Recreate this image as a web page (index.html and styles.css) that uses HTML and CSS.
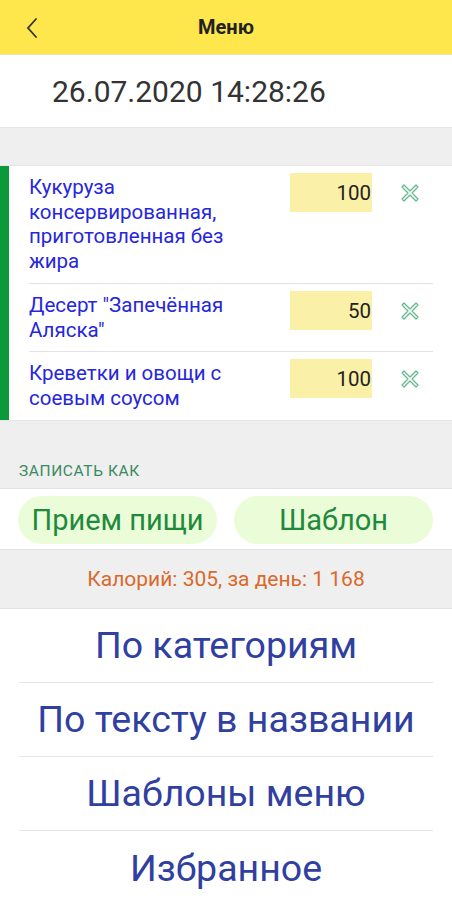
FILE: index.html
```html
<!DOCTYPE html>
<html lang="ru">
<head>
  <meta charset="UTF-8">
  <meta name="viewport" content="width=device-width, initial-scale=1.0">
  <title>Меню</title>
  <link rel="stylesheet" href="styles.css">
</head>
<body>

  <!-- Шапка -->
  <div class="header">
    <span class="back">
      <svg width="14" height="22" viewBox="0 0 14 22"><path d="M11 2 L3 11 L11 20" fill="none" stroke="#333" stroke-width="1.8" stroke-linecap="round"/></svg>
    </span>
    <h1>Меню</h1>
  </div>

  <div class="date-block">26.07.2020 14:28:26</div>

  <div class="spacer"></div>

  <!-- Список продуктов -->
  <div class="food-list">
    <div class="food-row">
      <div class="food-name">Кукуруза консервированная, приготовленная без жира</div>
      <div class="food-qty">100</div>
      <span class="food-del">
        <svg width="22" height="22" viewBox="0 0 22 22"><path d="M3 5 L5 3 L11 9 L17 3 L19 5 L13 11 L19 17 L17 19 L11 13 L5 19 L3 17 L9 11 Z" fill="none" stroke="#5fb98a" stroke-width="1.2" stroke-linejoin="round"/></svg>
      </span>
    </div>
    <div class="food-row">
      <div class="food-name">Десерт "Запечённая Аляска"</div>
      <div class="food-qty">50</div>
      <span class="food-del">
        <svg width="22" height="22" viewBox="0 0 22 22"><path d="M3 5 L5 3 L11 9 L17 3 L19 5 L13 11 L19 17 L17 19 L11 13 L5 19 L3 17 L9 11 Z" fill="none" stroke="#5fb98a" stroke-width="1.2" stroke-linejoin="round"/></svg>
      </span>
    </div>
    <div class="food-row">
      <div class="food-name">Креветки и овощи с соевым соусом</div>
      <div class="food-qty">100</div>
      <span class="food-del">
        <svg width="22" height="22" viewBox="0 0 22 22"><path d="M3 5 L5 3 L11 9 L17 3 L19 5 L13 11 L19 17 L17 19 L11 13 L5 19 L3 17 L9 11 Z" fill="none" stroke="#5fb98a" stroke-width="1.2" stroke-linejoin="round"/></svg>
      </span>
    </div>
  </div>

  <!-- Записать как -->
  <div class="section-title">ЗАПИСАТЬ КАК</div>
  <div class="save-buttons">
    <button class="pill">Прием пищи</button>
    <button class="pill">Шаблон</button>
  </div>

  <div class="calories">Калорий: 305, за день: 1 168</div>

  <!-- Способы добавления -->
  <div class="menu-list">
    <div class="menu-item">По категориям</div>
    <div class="menu-item">По тексту в названии</div>
    <div class="menu-item">Шаблоны меню</div>
    <div class="menu-item">Избранное</div>
  </div>

</body>
</html>
```

FILE: styles.css
```css
body {
  font-family: Roboto, "Noto Sans", Arial, sans-serif;
  background-color: #fff;
  margin: 0;
  padding: 0;
}

.header {
  height: 54px;
  background-color: #fde74c;
  display: flex;
  align-items: center;
  justify-content: center;
  position: relative;
  border-bottom: 1px solid #ece3b0;
}

.header h1 {
  margin: 0;
  font-size: 20px;
  font-weight: bold;
  color: #222;
}

.back {
  position: absolute;
  left: 25px;
  top: 17px;
  display: flex;
}

.date-block {
  height: 72px;
  display: flex;
  align-items: center;
  padding-left: 52px;
  font-size: 30px;
  color: #333;
}

.spacer {
  height: 37px;
  background-color: #efefef;
  border-top: 1px solid #e6e6e6;
  border-bottom: 1px solid #e6e6e6;
}

.food-list {
  border-left: 9px solid #0a9a3a;
  padding: 0 19px 0 20px;
}

.food-row {
  display: flex;
  align-items: flex-start;
  padding: 9px 0 9px;
  border-bottom: 1px solid #e3e3e3;
}

.food-row:last-child {
  border-bottom: none;
}

.food-name {
  flex: 1;
  margin-right: 28px;
  font-size: 20.5px;
  line-height: 24.7px;
  color: #2626dc;
}

.food-qty {
  width: 82px;
  height: 39px;
  margin-top: -2px;
  box-sizing: border-box;
  background-color: #fbf0a8;
  text-align: right;
  padding-right: 1px;
  line-height: 40px;
  font-size: 20.5px;
  color: #222;
}

.food-del {
  width: 61px;
  box-sizing: border-box;
  display: flex;
  justify-content: center;
  padding-top: 7px;
  padding-left: 14px;
}

.section-title {
  background-color: #efefef;
  border-top: 1px solid #e6e6e6;
  height: 68px;
  box-sizing: border-box;
  padding: 41px 0 0 19px;
  font-size: 15.5px;
  letter-spacing: 0.6px;
  line-height: 18px;
  color: #3a8a60;
}

.save-buttons {
  display: flex;
  gap: 17px;
  padding: 7px 19px 5px 18px;
  border-top: 1px solid #e2e2e2;
}

.pill {
  flex: 1;
  height: 48px;
  border: none;
  border-radius: 24px;
  background-color: #eafdd8;
  color: #1f8a3c;
  font-family: inherit;
  font-size: 29px;
  cursor: pointer;
}

.calories {
  height: 60px;
  box-sizing: border-box;
  display: flex;
  align-items: center;
  justify-content: center;
  background-color: #efefef;
  border-top: 1px solid #e2e2e2;
  border-bottom: 1px solid #e2e2e2;
  font-size: 21px;
  color: #d9692c;
}

.menu-list {
  padding: 0 19px;
}

.menu-item {
  height: 74px;
  box-sizing: border-box;
  display: flex;
  align-items: center;
  justify-content: center;
  font-size: 37.5px;
  color: #3040a0;
  border-bottom: 1px solid #e6e6e6;
}

.menu-item:last-child {
  border-bottom: none;
}
```
